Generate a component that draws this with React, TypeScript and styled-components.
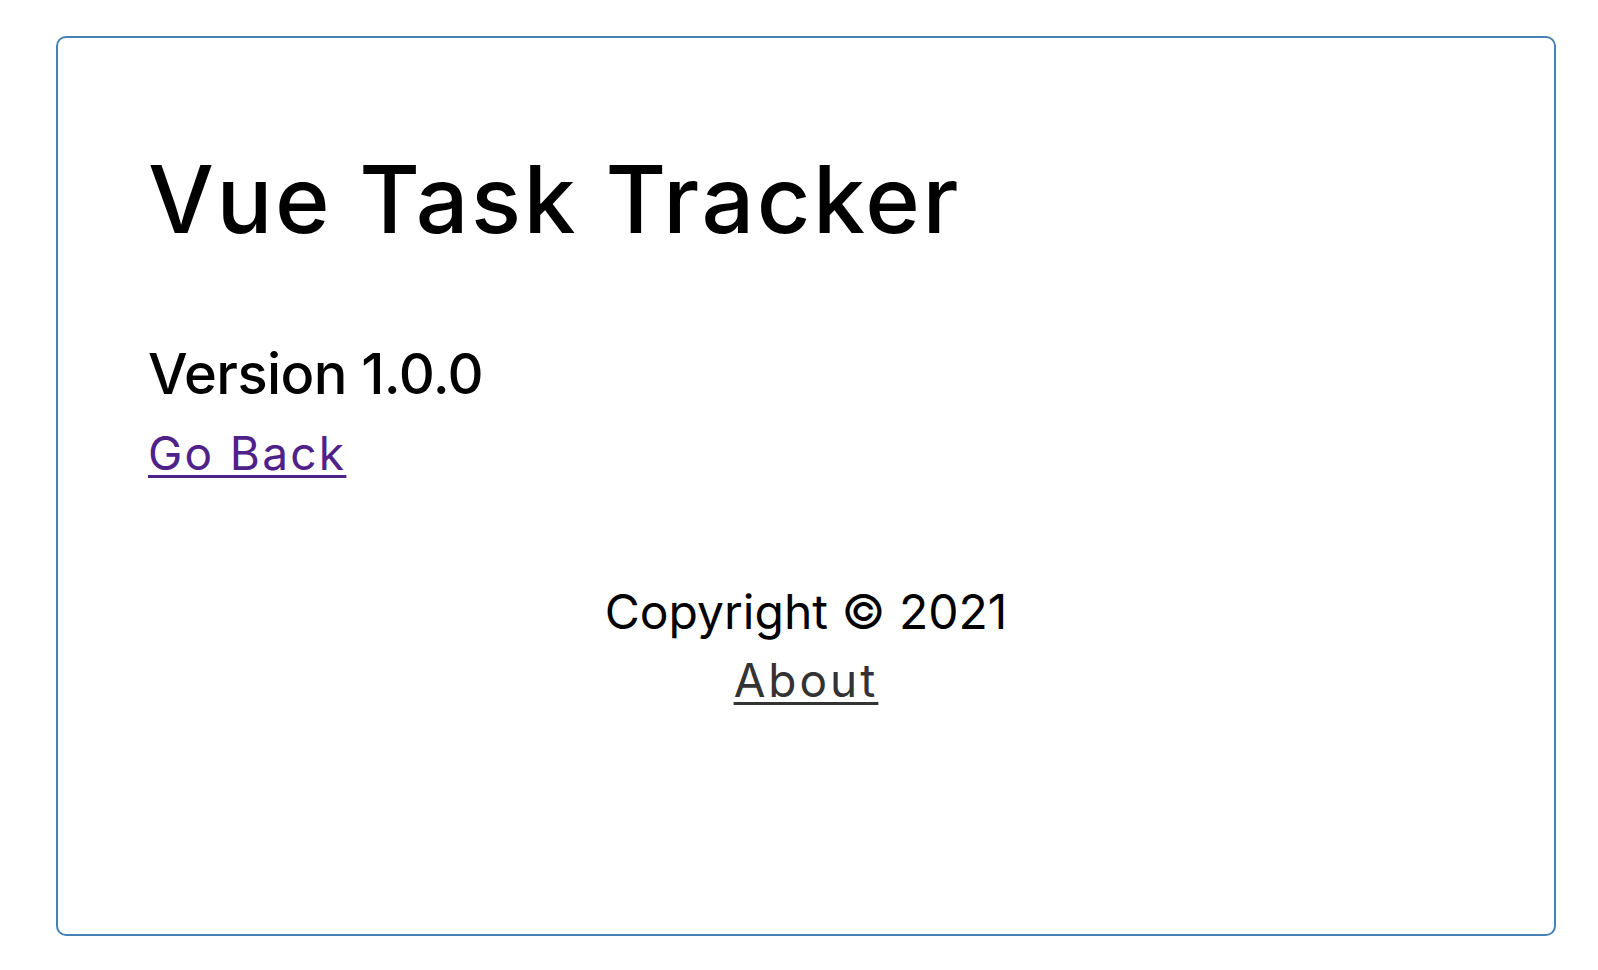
import styled, { createGlobalStyle } from 'styled-components';

const GlobalStyle = createGlobalStyle`
  * {
    box-sizing: border-box;
  }
  body {
    margin: 0;
    background: #fff;
    font-family: Inter, "Noto Sans", sans-serif;
    color: #000;
  }
`;

export default function App() {
  return (
    <>
      <GlobalStyle />
      <Container>
        <Title>Vue Task Tracker</Title>
        <Version>Version 1.0.0</Version>
        <BackLink href="#">Go Back</BackLink>
        <Footer>
          <Copyright>Copyright © 2021</Copyright>
          <FooterLink href="#">About</FooterLink>
        </Footer>
      </Container>
    </>
  );
}

const Container = styled.div`
  width: 1500px;
  height: 900px;
  margin: 36px 0 0 56px;
  padding: 105px 90px 0;
  border: 2px solid #4682b4;
  border-radius: 10px;
  overflow: hidden;
`;

const Title = styled.h1`
  margin: 0;
  font-size: 93px;
  line-height: 112px;
  font-weight: 500;
  letter-spacing: 2.5px;
`;

const Version = styled.h3`
  margin: 85px 0 0;
  font-size: 56px;
  line-height: 68px;
  font-weight: 500;
  letter-spacing: -0.6px;
`;

const BackLink = styled.a`
  display: inline-block;
  margin-top: 17px;
  font-size: 46px;
  line-height: 56px;
  letter-spacing: 2.3px;
  color: #4f2189;
  text-decoration: underline;
  text-decoration-thickness: 3px;
  text-underline-offset: 5px;
`;

const Footer = styled.footer`
  margin-top: 102px;
  display: flex;
  flex-direction: column;
  align-items: center;
  gap: 11px;
`;

const Copyright = styled.p`
  margin: 0;
  font-size: 48px;
  line-height: 58px;
`;

const FooterLink = styled.a`
  font-size: 46px;
  line-height: 56px;
  letter-spacing: 3px;
  color: #333;
  text-decoration: underline;
  text-decoration-thickness: 3px;
  text-underline-offset: 5px;
`;
